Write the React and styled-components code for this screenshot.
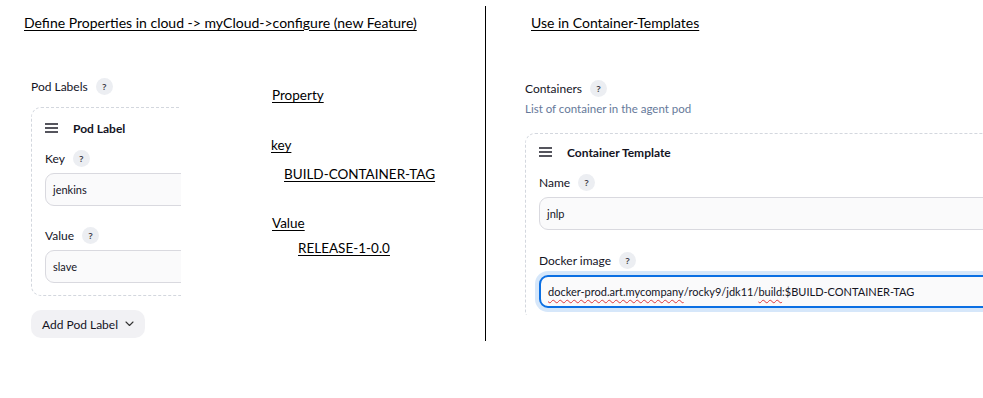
import React from 'react';
import styled, { createGlobalStyle } from 'styled-components';

const GlobalStyle = createGlobalStyle`
  body {
    margin: 0;
    background: #fff;
  }
`;

const Page = styled.div`
  display: flex;
  width: 983px;
  height: 398px;
  overflow: hidden;
  background: #fff;
`;

const LeftHalf = styled.section`
  width: 485px;
  flex-shrink: 0;
  padding-left: 24px;
  box-sizing: border-box;
`;

const Divider = styled.div`
  width: 1px;
  height: 335px;
  margin-top: 6px;
  background: #000;
  flex-shrink: 0;
`;

const RightHalf = styled.section`
  flex: 1;
  min-width: 0;
  padding-left: 45px;
  box-sizing: border-box;
`;

const Heading = styled.h2`
  margin: 14px 0 0;
  font-family: Lato, "Liberation Sans", sans-serif;
  font-size: 14px;
  font-weight: 400;
  line-height: 17px;
  color: #000;
  text-decoration: underline;
  text-underline-offset: 2px;
`;

const LeftBody = styled.div`
  display: flex;
  margin-left: 7px;
  margin-top: 47px;
`;

const Crop = styled.div`
  width: ${p => p.$width || 'auto'};
  flex-shrink: 0;
  overflow: hidden;
  font-family: Lato, "Noto Sans", sans-serif;
  color: #14141f;
`;

const FieldLabel = styled.div`
  display: flex;
  align-items: center;
  gap: 8px;
  height: 16px;
  font-size: 12px;
  white-space: nowrap;
`;

const Help = styled.span`
  display: inline-flex;
  align-items: center;
  justify-content: center;
  width: 17px;
  height: 17px;
  border-radius: 50%;
  background: #eceef2;
  color: #3a3a42;
  font-family: "Noto Sans", sans-serif;
  font-size: 9px;
  font-weight: 600;
`;

const Description = styled.div`
  margin-top: 5px;
  font-size: 11.5px;
  line-height: 16px;
  color: #66799a;
  white-space: nowrap;
`;

const Card = styled.div`
  width: ${p => p.$width};
  margin-top: ${p => p.$top};
  padding: ${p => p.$pad};
  border: 1px dashed #d3d7de;
  border-radius: 10px;
  box-sizing: border-box;
`;

const CardHeader = styled.div`
  display: flex;
  align-items: center;
  gap: 15px;
  height: 20px;
  font-size: 12px;
  font-weight: 700;
  white-space: nowrap;
`;

const Burger = styled.span`
  display: inline-flex;
  flex-direction: column;
  gap: 2px;
  width: 13px;

  i {
    display: block;
    height: 2px;
    background: #55555d;
  }
`;

const Field = styled.div`
  margin-top: ${p => p.$top};
`;

const Input = styled.div`
  display: flex;
  align-items: center;
  height: 33px;
  margin-top: 7px;
  padding-left: 7px;
  box-sizing: border-box;
  border: 1px solid #d9d9df;
  border-radius: 9px;
  background: #fafafb;
  font-size: 11px;
  white-space: nowrap;

  ${p => p.$focused && `
    border: 2px solid #0b6fe3;
    box-shadow: 0 0 0 4px #d6e7fa;
    padding-left: 7px;
  `}
`;

const Misspelled = styled.span`
  text-decoration: underline wavy #e0363a;
  text-decoration-thickness: 1px;
  text-underline-offset: 3px;
`;

const AddButton = styled.button`
  display: inline-flex;
  align-items: center;
  gap: 7px;
  height: 28px;
  margin-top: 14px;
  padding: 0 11px;
  border: none;
  border-radius: 10px;
  background: #f1f1f4;
  color: #14141f;
  font-family: Lato, "Noto Sans", sans-serif;
  font-size: 12px;
  white-space: nowrap;
`;

const Notes = styled.div`
  display: flex;
  flex-direction: column;
  margin-left: 91px;
  font-family: Lato, "Liberation Sans", sans-serif;
  font-size: 13.5px;
  line-height: 17px;
  color: #000;
`;

const Note = styled.span`
  margin-top: ${p => p.$top};
  margin-left: ${p => p.$indent || '0px'};
  text-decoration: underline;
  text-underline-offset: 2px;
  white-space: nowrap;
`;

const RightBody = styled.div`
  margin-left: -6px;
  margin-top: 49px;
`;

const RightCardCrop = styled.div`
  height: 182px;
  overflow: hidden;
  margin-top: 16px;
`;

const Chevron = () => (
  <svg width="9" height="6" viewBox="0 0 9 6" fill="none">
    <path d="M1 1l3.5 3.5L8 1" stroke="#333" strokeWidth="1.1" strokeLinecap="round" strokeLinejoin="round" />
  </svg>
);

const Hamburger = () => (
  <Burger>
    <i />
    <i />
    <i />
  </Burger>
);

export default function App() {
  return (
    <Page>
      <GlobalStyle />
      <LeftHalf>
        <Heading>Define Properties in cloud -&gt; myCloud-&gt;configure (new Feature)</Heading>
        <LeftBody>
          <Crop $width="150px">
            <FieldLabel>Pod Labels <Help>?</Help></FieldLabel>
            <Card $width="300px" $top="13px" $pad="10px 13px 12px">
              <CardHeader><Hamburger />Pod Label</CardHeader>
              <Field $top="12px">
                <FieldLabel>Key <Help>?</Help></FieldLabel>
                <Input>jenkins</Input>
              </Field>
              <Field $top="21px">
                <FieldLabel>Value <Help>?</Help></FieldLabel>
                <Input>slave</Input>
              </Field>
            </Card>
            <AddButton>Add Pod Label <Chevron /></AddButton>
          </Crop>
          <Notes>
            <Note $top="9px">Property</Note>
            <Note $top="33px" $indent="-1px">key</Note>
            <Note $top="12px" $indent="12px">BUILD-CONTAINER-TAG</Note>
            <Note $top="32px">Value</Note>
            <Note $top="8px" $indent="26px">RELEASE-1-0.0</Note>
          </Notes>
        </LeftBody>
      </LeftHalf>
      <Divider />
      <RightHalf>
        <Heading>Use in Container-Templates</Heading>
        <RightBody>
          <Crop>
            <FieldLabel>Containers <Help>?</Help></FieldLabel>
            <Description>List of container in the agent pod</Description>
            <RightCardCrop>
              <Card $width="520px" $top="0px" $pad="8px 0 12px 13px">
                <CardHeader><Hamburger />Container Template</CardHeader>
                <Field $top="12px">
                  <FieldLabel>Name <Help>?</Help></FieldLabel>
                  <Input>jnlp</Input>
                </Field>
                <Field $top="22px">
                  <FieldLabel>Docker image <Help>?</Help></FieldLabel>
                  <Input $focused>
                    <Misspelled>docker-prod.art.mycompany</Misspelled>/rocky9/jdk11/<Misspelled>build</Misspelled>:$BUILD-CONTAINER-TAG
                  </Input>
                </Field>
              </Card>
            </RightCardCrop>
          </Crop>
        </RightBody>
      </RightHalf>
    </Page>
  );
}
